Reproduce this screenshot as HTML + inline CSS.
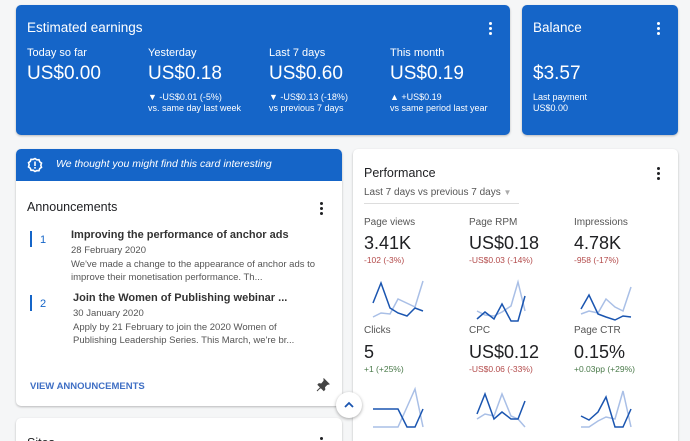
<!DOCTYPE html>
<html><head><meta charset="utf-8"><style>
*{box-sizing:border-box;margin:0;padding:0}
html,body{width:690px;height:441px;overflow:hidden}
body{background:#f5f6f7;font-family:"Liberation Sans",Arial,sans-serif;position:relative;color:#202124}
.card{position:absolute;border-radius:5px;box-shadow:0 1px 2px rgba(0,0,0,.25)}
.blue{background:#1565c8;color:#fff}
.white{background:#fff}
.dots{position:absolute;width:4px}
.dots i{display:block;width:3px;height:3px;border-radius:50%;background:currentColor;margin-bottom:1.8px}
.abs{position:absolute;white-space:nowrap}
</style></head><body>

<div class="card blue" style="left:16px;top:5px;width:494px;height:130px">
 <div class="abs" style="left:11px;top:15px;font-size:13.5px">Estimated earnings</div>
 <div class="dots" style="left:473px;top:17px;color:#fff"><i></i><i></i><i></i></div>
 <div class="abs" style="left:11px;top:42px;font-size:11px">Today so far</div>
 <div class="abs" style="left:11px;top:58px;font-size:19px">US$0.00</div>
 <div class="abs" style="left:132px;top:42px;font-size:11px">Yesterday</div>
 <div class="abs" style="left:132px;top:58px;font-size:19px">US$0.18</div>
 <div class="abs" style="left:132px;top:87px;font-size:9px;line-height:11px">▼ -US$0.01 (-5%)<br>vs. same day last week</div>
 <div class="abs" style="left:253px;top:42px;font-size:11px">Last 7 days</div>
 <div class="abs" style="left:253px;top:58px;font-size:19px">US$0.60</div>
 <div class="abs" style="left:253px;top:87px;font-size:9px;line-height:11px">▼ -US$0.13 (-18%)<br>vs previous 7 days</div>
 <div class="abs" style="left:374px;top:42px;font-size:11px">This month</div>
 <div class="abs" style="left:374px;top:58px;font-size:19px">US$0.19</div>
 <div class="abs" style="left:374px;top:87px;font-size:9px;line-height:11px">▲ +US$0.19<br>vs same period last year</div>
</div>

<div class="card blue" style="left:522px;top:5px;width:156px;height:130px">
 <div class="abs" style="left:11px;top:15px;font-size:13.5px">Balance</div>
 <div class="dots" style="left:135px;top:17px;color:#fff"><i></i><i></i><i></i></div>
 <div class="abs" style="left:11px;top:58px;font-size:19px">$3.57</div>
 <div class="abs" style="left:11px;top:87px;font-size:9px;line-height:11px">Last payment<br>US$0.00</div>
</div>

<div class="card white" style="left:16px;top:149px;width:326px;height:257px;overflow:hidden">
 <div style="background:#1565c8;height:32px;position:relative;color:#fff">
  <svg class="abs" style="left:11px;top:8px" width="16" height="16" viewBox="0 0 16 16"><path d="M8 1.5l1.8 1.3 2.2-.1.7 2.1 1.8 1.3-.7 2.1.7 2.1-1.8 1.3-.7 2.1-2.2-.1L8 14.5l-1.8-1.3-2.2.1-.7-2.1L1.5 9.9l.7-2.1-.7-2.1 1.8-1.3.7-2.1 2.2.1z" fill="none" stroke="#fff" stroke-width="1.6"/><rect x="7.2" y="4.5" width="1.6" height="4.5" fill="#fff"/><rect x="7.2" y="10" width="1.6" height="1.6" fill="#fff"/></svg>
  <div class="abs" style="left:40px;top:9px;font-size:10.5px;font-style:italic">We thought you might find this card interesting</div>
 </div>
 <div class="abs" style="left:11px;top:51px;font-size:12.5px">Announcements</div>
 <div class="dots" style="left:304px;top:53px;color:#202124"><i></i><i></i><i></i></div>
 <div class="abs" style="left:14px;top:82px;width:2px;height:16px;background:#1565c8"></div>
 <div class="abs" style="left:24px;top:85px;font-size:11px;color:#1565c8">1</div>
 <div class="abs" style="left:55px;top:80px;font-size:11px;font-weight:bold;color:#333">Improving the performance of anchor ads</div>
 <div class="abs" style="left:55px;top:95px;font-size:9.5px;color:#555;line-height:13.5px">28 February 2020<br>We've made a change to the appearance of anchor ads to<br>improve their monetisation performance. Th...</div>
 <div class="abs" style="left:14px;top:146px;width:2px;height:16px;background:#1565c8"></div>
 <div class="abs" style="left:24px;top:149px;font-size:11px;color:#1565c8">2</div>
 <div class="abs" style="left:57px;top:143px;font-size:11px;font-weight:bold;color:#333">Join the Women of Publishing webinar ...</div>
 <div class="abs" style="left:57px;top:158px;font-size:9.5px;color:#555;line-height:13.5px">30 January 2020<br>Apply by 21 February to join the 2020 Women of<br>Publishing Leadership Series. This March, we're br...</div>
 <div class="abs" style="left:14px;top:232px;font-size:9.5px;font-weight:bold;color:#3f6fc4">VIEW ANNOUNCEMENTS</div>
 <svg class="abs" style="left:300px;top:229px" width="14" height="14" viewBox="0 0 14 14"><path d="M8 1l5 5-2 .5-2.5 2.5.3 2.5-1 1-5.8-5.8 1-1 2.5.3L8 3z M4.5 9.5L1 13" fill="#444" stroke="#444" stroke-width="1"/></svg>
</div>

<div class="card white" style="left:16px;top:418px;width:326px;height:40px">
 <div class="abs" style="left:11px;top:18px;font-size:12.5px">Sites</div>
 <div class="dots" style="left:304px;top:19px;color:#202124"><i></i><i></i><i></i></div>
</div>

<div class="card white" style="left:353px;top:149px;width:325px;height:300px">
 <div class="abs" style="left:11px;top:17px;font-size:12.5px">Performance</div>
 <div class="dots" style="left:304px;top:18px;color:#202124"><i></i><i></i><i></i></div>
 <div class="abs" style="left:11px;top:38px;font-size:10px;color:#555">Last 7 days vs previous 7 days <span style="color:#aaa;font-size:8px">▼</span></div>
 <div class="abs" style="left:11px;top:54px;width:155px;height:1px;background:#ddd"></div>

 <div class="abs" style="left:11px;top:68px;font-size:10px;color:#555">Page views</div>
 <div class="abs" style="left:11px;top:84px;font-size:18px">3.41K</div>
 <div class="abs" style="left:11px;top:106px;font-size:8.5px;color:#b34a4a">-102 (-3%)</div>
 <div class="abs" style="left:116px;top:68px;font-size:10px;color:#555">Page RPM</div>
 <div class="abs" style="left:116px;top:84px;font-size:18px">US$0.18</div>
 <div class="abs" style="left:116px;top:106px;font-size:8.5px;color:#b34a4a">-US$0.03 (-14%)</div>
 <div class="abs" style="left:221px;top:68px;font-size:10px;color:#555">Impressions</div>
 <div class="abs" style="left:221px;top:84px;font-size:18px">4.78K</div>
 <div class="abs" style="left:221px;top:106px;font-size:8.5px;color:#b34a4a">-958 (-17%)</div>

 <div class="abs" style="left:11px;top:176px;font-size:10px;color:#555">Clicks</div>
 <div class="abs" style="left:11px;top:193px;font-size:18px">5</div>
 <div class="abs" style="left:11px;top:215px;font-size:8.5px;color:#4a7a4a">+1 (+25%)</div>
 <div class="abs" style="left:116px;top:176px;font-size:10px;color:#555">CPC</div>
 <div class="abs" style="left:116px;top:193px;font-size:18px">US$0.12</div>
 <div class="abs" style="left:116px;top:215px;font-size:8.5px;color:#b34a4a">-US$0.06 (-33%)</div>
 <div class="abs" style="left:221px;top:176px;font-size:10px;color:#555">Page CTR</div>
 <div class="abs" style="left:221px;top:193px;font-size:18px">0.15%</div>
 <div class="abs" style="left:221px;top:215px;font-size:8.5px;color:#4a7a4a">+0.03pp (+29%)</div>

 <svg class="abs" style="left:0;top:0" width="325" height="300">
  <g fill="none" stroke-width="1.5">
   <polyline stroke="#a9bfe6" points="20,168 28,164 37,165 45,150 62,158 70,132"/>
   <polyline stroke="#1a55b0" points="20,154 28,134 37,159 45,164 54,167 62,159 70,162"/>
   <polyline stroke="#a9bfe6" points="124,162 132,166 141,167 149,163 158,157 165,133 172,162"/>
   <polyline stroke="#1a55b0" points="124,170 132,163 141,170 149,155 158,172 165,172 172,147"/>
   <polyline stroke="#a9bfe6" points="228,165 236,162 245,164 253,150 262,158 270,162 278,138"/>
   <polyline stroke="#1a55b0" points="228,160 236,146 245,165 253,168 262,171 270,167 278,168"/>
   <polyline stroke="#a9bfe6" points="20,278 45,278 54,258 62,240 70,278"/>
   <polyline stroke="#1a55b0" points="20,260 45,260 54,278 62,278 70,260"/>
   <polyline stroke="#a9bfe6" points="124,270 132,265 141,267 149,245 158,267 165,270 172,278"/>
   <polyline stroke="#1a55b0" points="124,265 132,245 141,270 149,263 158,270 165,270 172,252"/>
   <polyline stroke="#a9bfe6" points="228,278 236,278 245,272 253,268 262,270 270,242 278,278"/>
   <polyline stroke="#1a55b0" points="228,267 236,271 245,263 253,248 262,278 270,278 278,260"/>
  </g>
 </svg>
</div>

<div class="abs" style="left:336px;top:392px;width:26px;height:26px;border-radius:50%;background:#fff;box-shadow:0 1px 3px rgba(0,0,0,.35)">
 <svg width="26" height="26" viewBox="0 0 26 26"><path d="M9 15l4-4 4 4" fill="none" stroke="#1a55b0" stroke-width="1.8"/></svg>
</div>
</body></html>
